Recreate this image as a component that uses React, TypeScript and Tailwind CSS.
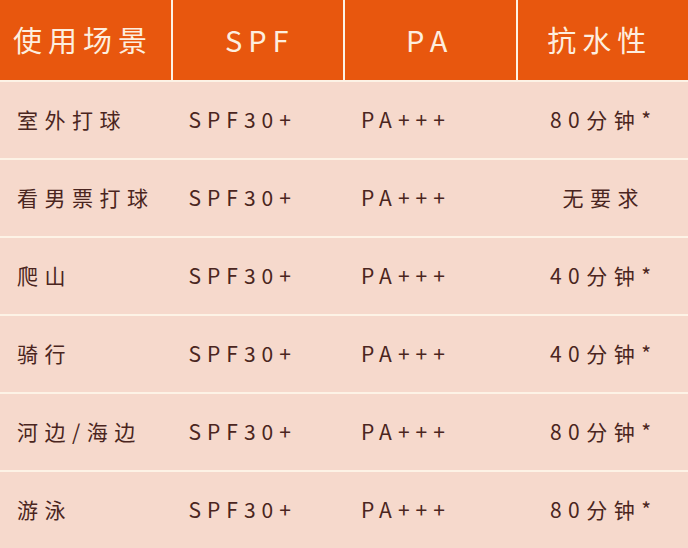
import React from "react";

const rows: [string, string, string, string][] = [
  ["室外打球", "SPF30+", "PA+++", "80分钟*"],
  ["看男票打球", "SPF30+", "PA+++", "无要求"],
  ["爬山", "SPF30+", "PA+++", "40分钟*"],
  ["骑行", "SPF30+", "PA+++", "40分钟*"],
  ["河边/海边", "SPF30+", "PA+++", "80分钟*"],
  ["游泳", "SPF30+", "PA+++", "80分钟*"],
];

export default function App() {
  return (
    <div
      className="w-[688px] h-[548px] bg-[#FDF3E6] flex flex-col gap-[2px] overflow-hidden"
      style={{ fontFamily: '"Noto Sans CJK SC", "Noto Sans", sans-serif' }}
    >
      <div className="grid grid-cols-4 gap-x-[2px] h-[80px] shrink-0">
        <div className="bg-[#E8570E] flex items-center pl-[13px] text-[29px] tracking-[6px] text-[#FDEEDF]">
          使用场景
        </div>
        <div className="bg-[#E8570E] flex items-center justify-center pl-[4px] text-[29px] tracking-[6px] text-[#FDEEDF]">
          SPF
        </div>
        <div className="bg-[#E8570E] flex items-center justify-center text-[29px] tracking-[7px] text-[#FDEEDF]">
          PA
        </div>
        <div className="bg-[#E8570E] flex items-center justify-center pr-[6px] text-[29px] tracking-[6px] text-[#FDEEDF]">
          抗水性
        </div>
      </div>
      {rows.map((r, i) => (
        <div
          key={i}
          className="grid grid-cols-4 gap-x-[2px] h-[76px] shrink-0 bg-[#F6D9CC] text-[21px] text-[#4A2520]"
        >
          <div className="flex items-center pl-[17px] tracking-[6.5px]">{r[0]}</div>
          <div className="flex items-center pl-[16px] tracking-[6px]">{r[1]}</div>
          <div className="flex items-center pl-[16px] tracking-[6px]">{r[2]}</div>
          <div className="flex items-center justify-center pl-[2px] tracking-[6.5px]">{r[3]}</div>
        </div>
      ))}
    </div>
  );
}
